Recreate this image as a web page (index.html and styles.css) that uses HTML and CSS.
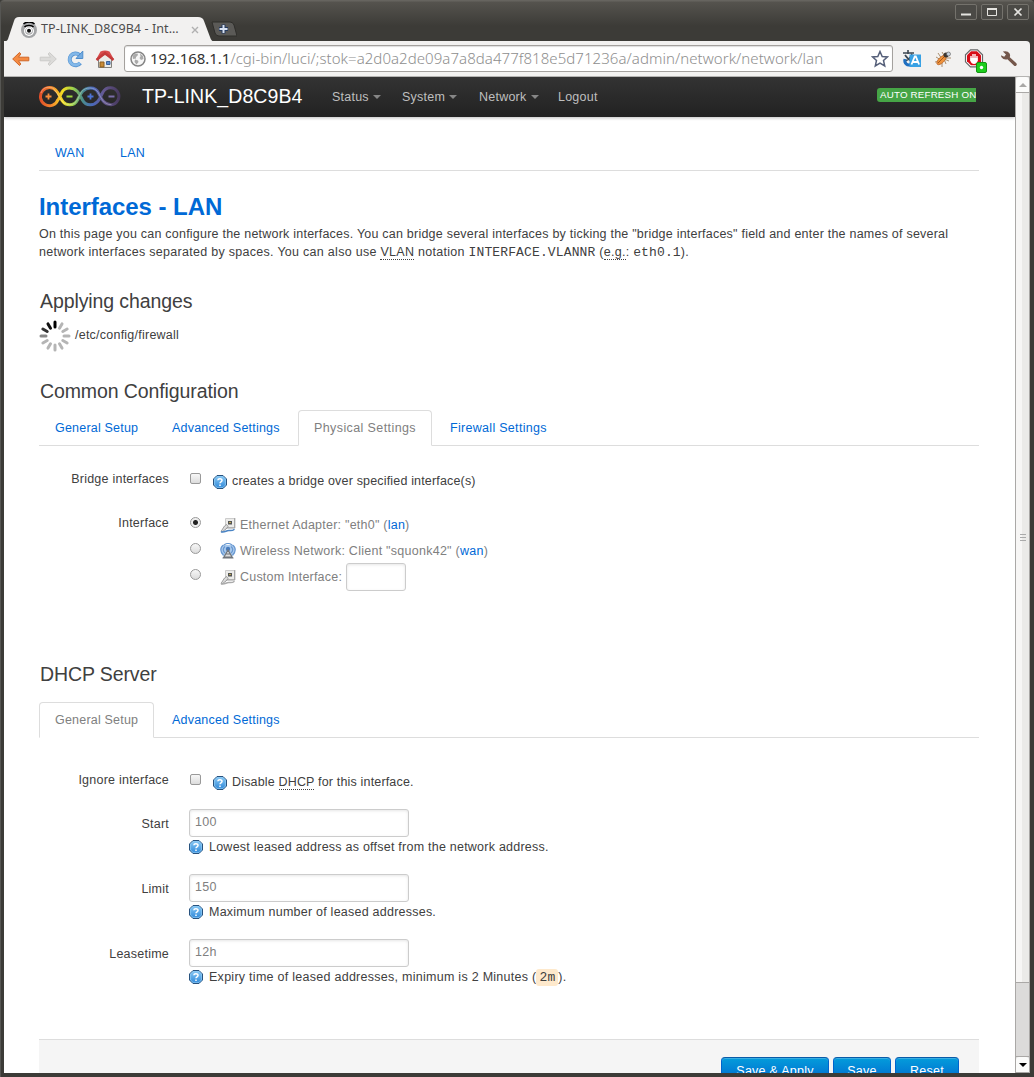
FILE: index.html
```html
<!DOCTYPE html>
<html lang="en">
<head>
<meta charset="utf-8">
<title>TP-LINK_D8C9B4 - Interfaces - LAN</title>
<link rel="stylesheet" href="styles.css">
</head>
<body>
<svg class="defs" width="0" height="0" aria-hidden="true">
  <defs>
    <linearGradient id="gb" x1="0" y1="0" x2="0" y2="1"><stop offset="0" stop-color="#8ccbf6"/><stop offset="1" stop-color="#2c86d8"/></linearGradient>
    <linearGradient id="rainbow" gradientUnits="userSpaceOnUse" x1="1" y1="0" x2="82" y2="0"><stop offset="0" stop-color="#e04a28"/><stop offset=".16" stop-color="#f5892c"/><stop offset=".29" stop-color="#f6dd22"/><stop offset=".42" stop-color="#9bd04a"/><stop offset=".54" stop-color="#4a8c8c"/><stop offset=".66" stop-color="#4a68bb"/><stop offset=".8" stop-color="#655890"/><stop offset="1" stop-color="#45375a"/></linearGradient>
    <symbol id="help" viewBox="0 0 14 14"><path d="M4 .5h6L13.5 4v6L10 13.5H4L.5 10V4z" fill="url(#gb)" stroke="#28527e"/><path d="M4 1.6h6L12.4 4v6L10 12.4H4L1.6 10V4z" fill="none" stroke="#8cc8f2" stroke-width=".8"/><path d="M4.8 5.3C5 3.2 9 3.3 9 5.4 9 6.9 7 6.8 7 8.3M7 9.4v1.5" fill="none" stroke="#fff" stroke-width="1.5"/></symbol>
    <symbol id="plug" viewBox="0 0 16 16"><path d="M5.5 1.5h9v9h-9z" fill="#ececea" stroke="#ccc"/><path d="M14.8 1v10H6" fill="none" stroke="#999"/><path d="M8 4h4v3.500H8z" fill="#555"/><path d="M9 5h2v1H9z" fill="#bda850"/><path d="M1 14.500 4.500 9l2-1.500 1.500 2-2 2.500-4 3z" fill="#ddd" stroke="#888" stroke-width=".8"/><path d="M1 14.800c4 1 5-1.500 8-1.300 2 .3 4 0 5.500-1.300" fill="none" stroke="currentColor" stroke-width="1.500"/></symbol>
  </defs>
</svg>
<div class="window">
  <header class="titlebar">
    <div class="tab">
      <svg class="tab-shape" viewBox="0 0 210 25" width="210" height="25"><path d="M0 25C4 24 4 22 5 19L10 4C11 1 12 0 15 0H194C197 0 199 1 200 4L206 20C207 23 208 24 210 25z" fill="#f2f1f0"/></svg>
      <svg class="favicon" viewBox="0 0 16 16" width="16" height="16"><circle cx="8" cy="8" r="8" fill="#a3a4a6"/><circle cx="8" cy="9" r="5" fill="#fff"/><circle cx="8" cy="9" r="3.800" fill="#a5a5a7"/><circle cx="8" cy="8.500" r="3" fill="#fff"/><circle cx="8" cy="8.700" r="2" fill="#111"/><path d="M3.500 5C5 3 11 3 12.500 5M2.500 2C5-.6 11-.6 13.500 2" fill="none" stroke="#000" stroke-width="1.500"/></svg>
      <span class="tab-title">TP-LINK_D8C9B4 - Int…</span>
      <svg class="tab-close" viewBox="0 0 8 8" width="8" height="8"><path d="M1 1l6 6M7 1l-6 6" stroke="#b0b0b0" stroke-width="1.400"/></svg>
    </div>
    <svg class="new-tab" viewBox="0 0 26 16" width="26" height="16"><path d="M1 1H19Q22 1 23 4L26 15H8Q5 15 4 12z" fill="#5b5a57" stroke="#2f2e2b"/><path d="M12.500 3.500v9M8 8h9" stroke="#24395c" stroke-width="4"/><path d="M12.500 4v8M8.500 8h8" stroke="#d8e2f2" stroke-width="2"/></svg>
    <div class="controls">
      <button class="ctl"><svg viewBox="0 0 20 14" width="20" height="14"><path d="M5 9.500h10" stroke="#e5e4e0" stroke-width="2"/></svg></button>
      <button class="ctl"><svg viewBox="0 0 20 14" width="20" height="14"><path d="M5.500 4v6.500h9V4z" fill="none" stroke="#e5e4e0"/><path d="M5 4h10" stroke="#e5e4e0" stroke-width="2"/></svg></button>
      <button class="ctl"><svg viewBox="0 0 20 14" width="20" height="14"><path d="M6.500 3.500l7 7M13.500 3.500l-7 7" stroke="#e5e4e0" stroke-width="1.700"/></svg></button>
    </div>
  </header>
  <nav class="toolbar">
    <svg class="t-back" viewBox="0 0 18 16" width="18" height="16"><path d="M.7 8 7.500 1.500 8.800 3 6.500 6.200h10.300v3.600H6.500L8.800 13 7.500 14.500z" fill="#f58b43" stroke="#cf6526"/></svg>
    <svg class="t-fwd" viewBox="0 0 18 16" width="18" height="16"><path d="M17.300 8 10.500 1.500 9.200 3l2.300 3.200H1.200v3.600h10.300L9.200 13l1.300 1.500z" fill="#dcdbd9" stroke="#cbcac8"/></svg>
    <svg class="t-reload" viewBox="0 0 18 18" width="18" height="18"><path d="M13.300 13A5.900 5.900 0 1 1 12.500 5" fill="none" stroke="#5a96d2" stroke-width="4"/><path d="M13 12.700A5.800 5.800 0 1 1 12.500 5.200" fill="none" stroke="#83b8e9" stroke-width="2.600"/><path d="M15.800 1v7.500H9z" fill="#74ace2" stroke="#4f8dcc"/></svg>
    <svg class="t-home" viewBox="0 0 20 20" width="20" height="20"><path d="M3.500 10v8.500h13V10L10 4z" fill="#ecebe7" stroke="#83817c"/><path d="M1 10.500 5.500 2.500Q10 .5 14.500 2.500L19 10.500 10 6z" fill="#d84a4a"/><path d="M1.500 11 10 4l8.500 7" fill="none" stroke="#c43a3a" stroke-width="2.500"/><path d="M5 13h4v5H5z" fill="#c88b36" stroke="#8b5c1e"/><path d="M11.500 12.500H15v3h-3.500z" fill="#5d8fd1" stroke="#3c629a"/></svg>
    <div class="omnibox">
      <svg viewBox="0 0 16 16" width="16" height="16"><circle cx="8" cy="8" r="7" fill="#f6f6f6" stroke="#858585" stroke-width="1.500"/><path d="M2.500 5 5 2.500l3 .3-.5 2L6 6v1.500L3 8zM5 8.500l3 1 .5 1.500-2 2.500L4.500 11zM10 2.500l3 2.500.5 3-2.500 1-1.500-2 1-1.500z" fill="#aaa"/></svg>
      <span class="url"><b>192.168.1.1</b>/cgi-bin/luci/;stok=a2d0a2de09a7a8da477f818e5d71236a/admin/network/network/lan</span>
      <svg class="star" viewBox="0 0 18 18" width="18" height="18"><path d="M9 1.500l2.200 5 5.300.4-4 3.600 1.200 5.400L9 13.100l-4.700 2.800 1.200-5.400-4-3.600 5.300-.4z" fill="#fff" stroke="#555f79" stroke-width="1.500"/></svg>
    </div>
    <svg class="t-tr" viewBox="0 0 20 20" width="20" height="20"><path d="M1 4h11M6 1v4M3 6c2 3 4 5 7 6M10 5C9 9 5 12 2 12" fill="none" stroke="#3b4650" stroke-width="1.600"/><path d="M3 10c-1 4 2 7 6 5.500" fill="none" stroke="#1f6fc0" stroke-width="3"/><path d="M7.500 5.500h11.500v12.500H7.500z" fill="#38a1e4"/><path d="M9.500 15.500l3.300-8h1l3.300 8M11 13h5" fill="none" stroke="#fff" stroke-width="1.800"/></svg>
    <svg class="t-bug" viewBox="0 0 18 18" width="18" height="18"><path d="M2 7l5 3M4 3l4 6M1 12l6-1M8 17v-6M12 14l-2-5M15 11l-5-2M8 2l3 5M17 8l-6 0" stroke="#a0825f" stroke-width=".9"/><ellipse cx="7.500" cy="10" rx="6" ry="2.800" transform="rotate(-45 7.500 10)" fill="#ef923b" stroke="#b9682e" stroke-width=".8"/><path d="M4 13l6-6" stroke="#904714" stroke-width=".8"/><circle cx="12" cy="5" r="2.500" fill="#3c3631"/><circle cx="14.500" cy="4" r="2" fill="#c9d5e1" stroke="#555" stroke-width=".6"/></svg>
    <svg class="t-stop" viewBox="0 0 24 24" width="24" height="24"><path d="M6.500.8h7l5 5v7l-5 5h-7l-5-5v-7z" fill="#fff" stroke="#666" stroke-width="1.200"/><path d="M7 2.300h6l4 4v6l-4 4H7l-4-4v-6z" fill="#d80d18"/><path d="M7 7v5M9 5v7M11 5v7M13 7v5" stroke="#fff" stroke-width="1.400"/><path d="M6.400 9h7.200v3q-1 3-3.600 3T6.400 12z" fill="#fff"/><rect x="12.500" y="13.500" width="10" height="10" rx="1.500" fill="#1dce1d" stroke="#139313"/><circle cx="17.500" cy="18.500" r="1.700" fill="#fff"/></svg>
    <svg class="t-wrench" viewBox="0 0 18 18" width="18" height="18"><path d="M2.800 1.600Q7.500.2 9.600 3.600q1 1.700.2 3.600l6.600 6q1 1.300-.1 2.300-1.100 1-2.400 0L7.400 9.300Q3.800 10.500 1.300 7L1 5.300 4.200 6.800 6 4.500z" fill="#74574b"/></svg>
  </nav>
  <div class="viewport">
    <div class="page">
      <div class="topbar">
        <svg class="logo" viewBox="0 0 84 22" width="84" height="22"><g fill="none" stroke="url(#rainbow)" stroke-width="3"><path d="M20 13.500A9 9 0 1 1 18.500 5C22.500 9 23 18.500 31.500 18.700A8.700 8.700 0 0 0 39.500 14C42 9 44.500 2 52.500 2A8.700 8.700 0 0 1 60.500 7C63 12 65.500 18.700 73 18.700A8.500 8.500 0 1 0 65 6C62 12 60 18.700 52.500 18.700A8.700 8.700 0 0 1 44.500 14C42 9 39.500 2 31.500 2A8.700 8.700 0 0 0 23.500 7C22 10 20 15 18 16.500"/></g><g fill="none" stroke="#fff" stroke-opacity=".4" stroke-width=".8"><path d="M3 7a8 8 0 0 1 15-1c4 4 5 12.500 13.500 12.700 8 0 9-9 12-13 4-5 13-5 16.500.5 3 5 5 12.500 13.500 12.500"/></g><path d="M7.500 10.500h6M10.500 7.500v6" stroke="#f68d3c" stroke-width="1.800"/><path d="M28.500 10.500h6" stroke="#9fd63c" stroke-width="1.800"/><path d="M49.500 10.500h6M52.500 7.500v6" stroke="#4c73d6" stroke-width="1.800"/><path d="M70.500 10.500h6" stroke="#7a6da8" stroke-width="1.800"/></svg>
        <a class="brand">TP-LINK_D8C9B4</a>
        <a class="menu m-status">Status<i></i></a><a class="menu m-system">System<i></i></a><a class="menu m-network">Network<i></i></a><a class="menu">Logout</a>
        <span class="badge">AUTO REFRESH ON</span>
      </div>
      <main class="content">
        <ul class="tabs sections"><li class="wan"><a>WAN</a></li><li><a>LAN</a></li></ul>
        <h2>Interfaces - LAN</h2>
        <p class="intro"><span class="l1">On this page you can configure the network interfaces. You can bridge several interfaces by ticking the "bridge interfaces" field and enter the names of several</span><br><span class="l2">network interfaces separated by spaces. You can also use <abbr>VLAN</abbr> notation <code>INTERFACE.VLANNR</code> (<abbr>e.g.</abbr>: <code>eth0.1</code>).</span></p>
        <h3 class="applying">Applying changes</h3>
        <div class="progress">
          <svg viewBox="-16 -16 32 32" width="32" height="32" stroke-width="3" stroke-linecap="round"><g stroke="#b5b5b5"><path d="M0-14V-9" transform="rotate(30)"/><path d="M0-14V-9" transform="rotate(60)"/><path d="M0-14V-9" transform="rotate(90)"/><path d="M0-14V-9" transform="rotate(120)"/><path d="M0-14V-9" transform="rotate(150)"/><path d="M0-14V-9" transform="rotate(180)"/><path d="M0-14V-9" transform="rotate(210)"/><path d="M0-14V-9" transform="rotate(240)"/></g><path d="M0-14V-9" stroke="#888" transform="rotate(270)"/><path d="M0-14V-9" stroke="#333" transform="rotate(300)"/><path d="M0-14V-9" stroke="#111" transform="rotate(330)"/><path d="M0-14V-9" stroke="#000"/></svg>
          <span>/etc/config/firewall</span>
        </div>
        <h3 class="common">Common Configuration</h3>
        <ul class="tabs"><li class="general"><a>General Setup</a></li><li class="advanced"><a>Advanced Settings</a></li><li class="physical active"><a>Physical Settings</a></li><li class="firewall"><a>Firewall Settings</a></li></ul>
        <div class="row first">
          <label>Bridge interfaces</label>
          <div class="check"><input type="checkbox"><svg class="help" width="14" height="14"><use href="#help"/></svg><span>creates a bridge over specified interface(s)</span></div>
        </div>
        <div class="row iface">
          <label>Interface</label>
          <div class="options">
            <div class="option"><input type="radio" name="if" checked><svg class="blue" width="16" height="16"><use href="#plug"/></svg><span>Ethernet Adapter: "eth0" (<a>lan</a>)</span></div>
            <div class="option"><input type="radio" name="if"><svg viewBox="0 0 16 16" width="16" height="16"><path d="M3 13C0 10 0 5 3 2h10c3 3 3 8 0 11z" fill="#a9c9ec"/><path d="M3.500 12C-.2 9 0 4 3.500 2M5 10C2.500 8 3 5 5 3.500M12.500 12C16.200 9 16 4 12.500 2M11 10C13.500 8 13 5 11 3.500M4 2q4-3 8 0" fill="none" stroke="#6797d0" stroke-width="1.200"/><circle cx="8" cy="6" r="2.200" fill="#477bbd"/><path d="M8 7 4 14h8zM2.500 15h11M6 11h4" fill="#ddd" stroke="#70757b" stroke-width="1.200"/></svg><span class="wl">Wireless Network: Client "squonk42" (<a>wan</a>)</span></div>
            <div class="option"><input type="radio" name="if"><svg class="gray" width="16" height="16"><use href="#plug"/></svg><span class="ci">Custom Interface:</span><input class="text custom" type="text"></div>
          </div>
        </div>
        <h3 class="dhcp">DHCP Server</h3>
        <ul class="tabs"><li class="general active"><a>General Setup</a></li><li class="advanced"><a>Advanced Settings</a></li></ul>
        <div class="row ignore">
          <label>Ignore interface</label>
          <div class="check"><input type="checkbox"><svg class="help" width="14" height="14"><use href="#help"/></svg><span>Disable <abbr>DHCP</abbr> for this interface.</span></div>
        </div>
        <div class="row field"><label>Start</label><div><input class="text" type="text" value="100"><p class="hint"><svg width="14" height="14"><use href="#help"/></svg><span>Lowest leased address as offset from the network address.</span></p></div></div>
        <div class="row field"><label>Limit</label><div><input class="text" type="text" value="150"><p class="hint"><svg width="14" height="14"><use href="#help"/></svg><span>Maximum number of leased addresses.</span></p></div></div>
        <div class="row field"><label>Leasetime</label><div><input class="text" type="text" value="12h"><p class="hint expiry"><svg width="14" height="14"><use href="#help"/></svg><span>Expiry time of leased addresses, minimum is 2 Minutes (<code class="mark">2m</code>).</span></p></div></div>
        <div class="actions"><button class="w1">Save &amp; Apply</button><button class="w2">Save</button><button class="w3">Reset</button></div>
      </main>
    </div>
    <div class="scrollbar">
      <div class="sb-btn"><svg viewBox="0 0 8 4" width="8" height="4"><path d="M0 4l4-4 4 4z" fill="#a9a8a6"/></svg></div>
      <div class="thumb"><i></i><i></i><i></i></div>
      <div class="trough"></div>
      <div class="sb-btn"><svg viewBox="0 0 8 4" width="8" height="4"><path d="M0 0l4 4 4-4z" fill="#000"/></svg></div>
    </div>
  </div>
</div>
</body>
</html>
```
FILE: styles.css
```css
* { box-sizing: border-box; }
body { margin: 0; background: #3c3b37; font: 12.5px/18px "Liberation Sans", Arial, sans-serif; letter-spacing: .235px; color: #404040; overflow: hidden; }
svg { display: block; flex: none; }
.defs { position: absolute; }
h2, h3, p, ul { margin: 0; padding: 0; }
.window { width: 1034px; height: 1077px; display: flex; flex-direction: column; border: 1px solid #565653; border-width: 0 0 0 1px; border-radius: 4px 4px 0 0; padding: 0 4px 4px 3px; overflow: hidden; background: linear-gradient(#66645f, #66645f 1px, #55534e 2px, #3c3b37 26px); }

.titlebar { height: 41px; display: flex; align-items: flex-start; flex: none; }
.tab { display: grid; grid-template-columns: 16px 1fr 8px; column-gap: 4px; align-items: center; width: 206px; height: 25px; margin-top: 17px; padding: 0 11px 0 17px; }
.tab > * { grid-row: 1; }
.tab-shape { position: absolute; left: 4px; top: 17px; }
.favicon, .tab-title, .tab-close { position: relative; }
.favicon { grid-column: 1; }
.tab-title { grid-column: 2; font: 12.5px "Noto Sans", sans-serif; color: #4c4c4c; letter-spacing: .1px; white-space: nowrap; margin-top: -2px; }
.tab-close { grid-column: 3; }
.new-tab { margin: 21px 0 0 1px; }
.controls { margin: 4px 1px 0 auto; display: flex; gap: 4px; }
.ctl { width: 22px; height: 16px; padding: 0; border: 1px solid #74726c; border-radius: 2px; background: #4b4a46; }

.toolbar { height: 36px; flex: none; display: flex; align-items: center; background: #f2f1f0; border-bottom: 1px solid #b5b4b2; border-radius: 0 4px 0 0; }
.t-back { margin-left: 8px; }
.t-fwd { margin-left: 9px; }
.t-reload { margin-left: 10px; }
.t-home { margin-left: 10px; }
.omnibox { margin-left: 9px; width: 769px; height: 27px; border: 1px solid #a4a19e; border-radius: 3px; background: #fff; display: flex; align-items: center; padding: 0 3px 0 5px; box-shadow: inset 0 1px 1px #ddd; }
.url { margin: -2px 0 0 4px; font: 15px "Noto Sans", sans-serif; font-weight: 300; color: #8e8e8e; white-space: nowrap; letter-spacing: .055px; }
.url b { font-weight: 400; color: #333; letter-spacing: -.03px; }
.star { margin-left: auto; }
.t-tr { margin-left: 9px; }
.t-bug { margin-left: 12px; }
.t-stop { margin: 4px 0 0 12px; }
.t-wrench { margin-left: 12px; }

.viewport { flex: 1; min-height: 0; display: flex; background: #fff; }
.page { width: 1011px; overflow: hidden; }
.topbar { height: 40px; display: flex; align-items: center; padding-left: 34px; background: linear-gradient(#333, #222); box-shadow: 0 1px 3px rgba(0,0,0,.25); }
.logo { margin-top: -1px; }
.brand { margin: -3px 0 0 20px; width: 190px; font-size: 19.5px; letter-spacing: .08px; color: #fff; white-space: nowrap; }
.menu { display: flex; align-items: center; color: #bfbfbf; }
.menu i { margin-left: 4px; border: 4px solid transparent; border-top-color: #868686; border-bottom: 0; }
.m-status { width: 70px; }
.m-system { width: 77px; }
.m-network { width: 79px; }
.badge { margin: -4px 39px 0 auto; width: 99px; height: 14px; padding: 0 0 0 3px; background: #46a546; border-radius: 3px 0 0 3px; color: #fff; font-size: 9.75px; letter-spacing: .19px; line-height: 13px; white-space: nowrap; overflow: hidden; }

.content { width: 940px; margin-left: 35px; padding-top: 18px; }
.tabs { list-style: none; display: flex; height: 36px; border-bottom: 1px solid #ddd; }
.tabs li { height: 36px; margin-right: 2px; padding: 0 0 0 15px; border: 1px solid transparent; border-radius: 4px 4px 0 0; line-height: 34px; white-space: nowrap; }
.tabs .active { background: #fff; border-color: #ddd; border-bottom-color: #fff; }
.wan { width: 63px; }
.general { width: 115px; letter-spacing: .2px; }
.advanced { width: 140px; letter-spacing: .2px; }
.physical { width: 134px; letter-spacing: .4px; }
.firewall { letter-spacing: .3px; }
a { color: #0069d6; }
.active a { color: #808080; }
h2 { margin-top: 18px; font-size: 24px; line-height: 36px; letter-spacing: -.05px; color: #0069d6; }
.intro { white-space: nowrap; }
.l1 { letter-spacing: .225px; }
.l2 { letter-spacing: .285px; }
code { font: 13px "Liberation Mono", monospace; line-height: 17px; letter-spacing: .13px; }
abbr { border-bottom: 1px dotted #404040; }
h3 { padding-left: 1px; font-weight: 400; font-size: 19.5px; line-height: 36px; letter-spacing: -.1px; }
.applying { margin-top: 22px; }
.progress { display: flex; align-items: center; gap: 4px; height: 34px; }
.progress span { margin-top: -2px; }
.common { margin-top: 20px; }
.common + .tabs { margin-top: 1px; }
.row { display: grid; grid-template-columns: 130px 1fr; column-gap: 20px; }
.row label { text-align: right; }
.first { margin-top: 24px; height: 44px; }
.ignore { margin-top: 33px; height: 38px; }
.check, .option { display: flex; align-items: center; }
.check { height: 22px; letter-spacing: .17px; }
.check span { margin-left: 5px; }
.help { margin-top: 2px; }
input[type=checkbox], input[type=radio] { appearance: none; flex: none; width: 11px; height: 11px; margin: -5px 12px 0 1px; border: 1px solid #999; border-radius: 2px; background: linear-gradient(#f7f7f7, #dcdcdc); }
input[type=radio] { border-radius: 50%; margin-right: 19px; }
input[type=radio]:checked { background: radial-gradient(circle, #222 0 2px, #eee 3px); }
.option { height: 26px; color: #808080; }
.option span { margin-left: 4px; }
.wl { letter-spacing: .26px; }
.ci { letter-spacing: .2px; }
.options { margin-top: -2px; }
.blue { color: #4a84c4; }
.gray { color: #aaa; }
.text { display: block; width: 220px; height: 28px; border: 1px solid #ccc; border-radius: 3px; padding: 3px 5px 5px; font: 12.5px/18px "Liberation Sans", Arial, sans-serif; letter-spacing: .25px; color: #808080; box-shadow: inset 0 1px 3px rgba(0,0,0,.1); }
.custom { width: 60px; margin-left: 4px; }
.iface { height: 141px; }
.dhcp { margin-top: 1px; }
.dhcp + .tabs { margin-top: 10px; }
.field { height: 65px; }
.field label { margin-top: 6px; }
.hint { display: flex; align-items: center; gap: 6px; height: 20px; }
.expiry { letter-spacing: .27px; }
.mark { background: #fee9cc; border-radius: 3px; padding: 1px 3px; }
.actions { margin-top: 35px; height: 70px; padding: 17px 20px; display: flex; justify-content: flex-end; gap: 4px; background: #f5f5f5; border-top: 1px solid #ddd; }
.actions button { height: 28px; padding: 0; border: 1px solid #0064cd; border-top-color: #0a5ba8; border-radius: 4px; background: linear-gradient(#049cdb, #0064cd); box-shadow: inset 0 1px 0 #38aee2; color: #fff; font: 12.5px/18px "Liberation Sans", Arial, sans-serif; letter-spacing: .25px; }
.w1 { width: 108px; }
.w2 { width: 58px; }
.w3 { width: 64px; }

.scrollbar { width: 15px; display: flex; flex-direction: column; border: 1px solid #aaa8a6; border-top: 0; background: #dcdbda; }
.sb-btn { height: 15px; flex: none; background: #fbfbfa; display: flex; align-items: center; justify-content: center; border-radius: 3px 3px 0 0; }
.thumb { height: 891px; border: 1px solid #aaa8a6; border-width: 1px 0; background: linear-gradient(90deg, #f7f6f5 50%, #ebeae8 50%); display: flex; flex-direction: column; align-items: center; justify-content: center; gap: 2px; }
.thumb i { width: 6px; height: 1px; background: #aaa; }
.trough { flex: 1; border-bottom: 1px solid #aaa8a6; }
```
